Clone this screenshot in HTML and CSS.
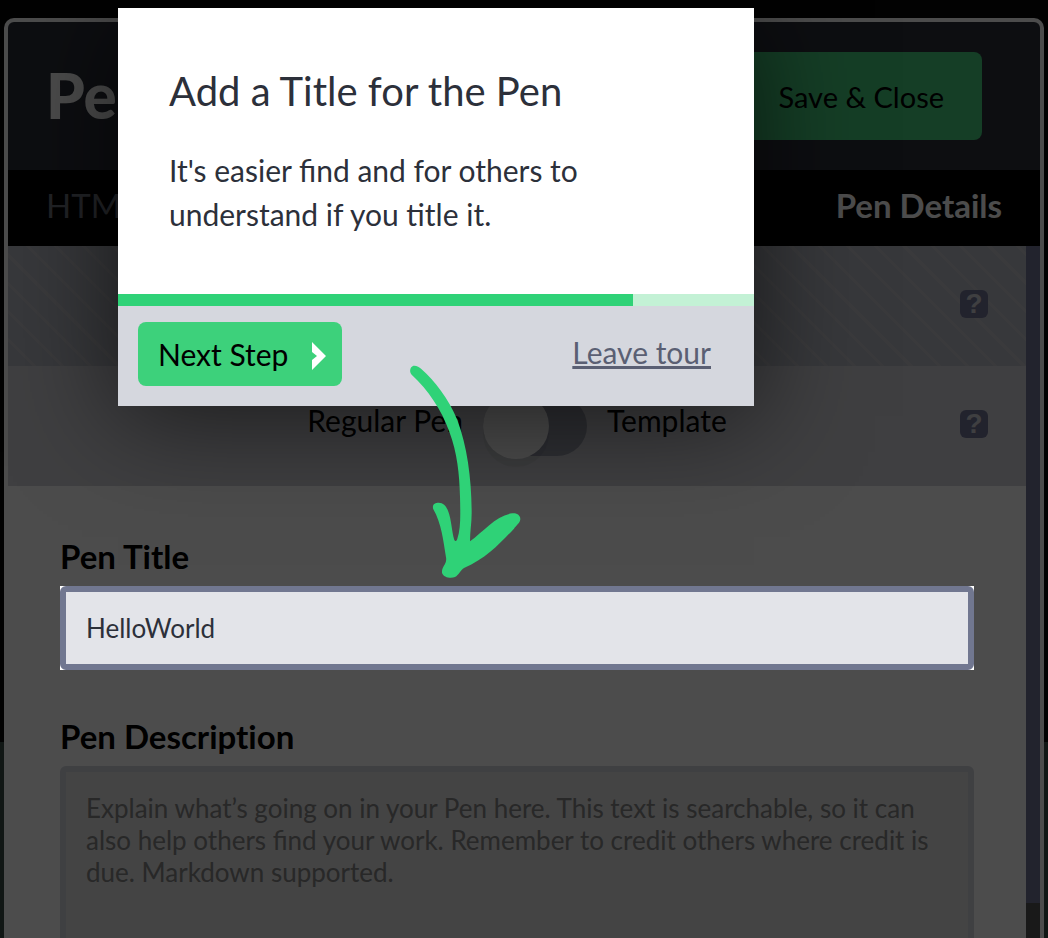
FILE: index.html
```html
<!DOCTYPE html>
<html lang="en">
<head>
    <meta charset="UTF-8">
    <meta name="viewport" content="width=device-width, initial-scale=1.0">
    <title>Pen Settings</title>
    <link rel="stylesheet" href="styles.css">
</head>
<body>

<main class="settings">
    <header class="settings-header">
        <h1>Pen</h1>
        <button type="button" class="save-button">Save &amp; Close</button>
    </header>
    <nav class="tabs">
        <a href="#html">HTML</a>
        <a href="#details" class="active">Pen Details</a>
    </nav>
    <div class="settings-body">
        <form class="settings-form">
            <div class="option-row striped">
                <button type="button" class="help" aria-label="Help">?</button>
            </div>
            <div class="option-row">
                <div class="toggle-group">
                    <label for="template">Regular Pen</label>
                    <input type="checkbox" id="template" name="template" class="toggle">
                    <label for="template">Template</label>
                </div>
                <button type="button" class="help" aria-label="Help">?</button>
            </div>
            <div class="fields">
                <div class="form-group">
                    <label for="title">Pen Title</label>
                    <div class="spotlight">
                        <input type="text" id="title" name="title" value="HelloWorld">
                    </div>
                </div>
                <div class="form-group">
                    <label for="description">Pen Description</label>
                    <textarea id="description" name="description" rows="6" placeholder="Explain what’s going on in your Pen here. This text is searchable, so it can also help others find your work. Remember to credit others where credit is due. Markdown supported."></textarea>
                </div>
            </div>
        </form>
        <div class="scrollbar"><div class="thumb"></div></div>
    </div>
</main>

<section class="tour">
    <div class="tour-text">
        <h2>Add a Title for the Pen</h2>
        <p>It's easier find and for others to understand if you title it.</p>
    </div>
    <div class="progress"><div class="progress-fill" style="width: 81%"></div></div>
    <footer class="tour-footer">
        <button type="button" class="next-button">
            Next Step
            <svg width="14" height="32" viewBox="0 0 14 32"><path d="M0 4L14 18L0 32V22L5 18L0 14Z" fill="#fff"/></svg>
        </button>
        <a href="#leave">Leave tour</a>
    </footer>
    <svg class="arrow" viewBox="90 75 336 648">
        <path fill="#2fd277" d="M103 77C111 77 118 81 124 87C165 124 205 175 232 240C262 320 275 420 275 520C275 550 270 575 270 604C310 575 350 525 397 520C408 519 421 524 421 537C421 548 408 557 402 566C360 610 320 655 252 684C240 692 237 705 225 711C213 716 190 713 186 698C184 680 202 672 198 652C190 600 184 550 160 508C155 493 165 488 176 488C190 488 198 498 204 512C215 540 215 575 223 600C226 606 230 602 232 596C243 565 241 520 240 470C238 400 232 340 208 275C185 210 145 150 95 104C86 95 91 77 103 77Z"/>
    </svg>
</section>

</body>
</html>
```

FILE: styles.css
```css
* {
    box-sizing: border-box;
}
body {
    font-family: Lato, sans-serif;
    font-size: 30px;
    background: linear-gradient(#080808 742px, #394d49 742px);
    height: 100vh;
    margin: 0;
    padding: 18px 4px 0;
    overflow: hidden;
}
button,
input,
textarea {
    font-family: inherit;
    font-size: inherit;
    margin: 0;
}
button {
    border: none;
    cursor: pointer;
}
h1,
h2,
p {
    margin: 0;
}

/* settings panel */
.settings {
    height: 100%;
    display: flex;
    flex-direction: column;
    background-color: #fff;
    border: 4px solid #fff;
    border-bottom: none;
    border-radius: 10px 10px 0 0;
}
.settings-header {
    display: flex;
    justify-content: space-between;
    align-items: center;
    padding: 30px 58px 30px 38px;
    background-color: #2c303a;
    border-radius: 6px 6px 0 0;
}
.settings-header h1 {
    padding-bottom: 2px;
    color: #fff;
    font-size: 62px;
    font-weight: 900;
    line-height: 80px;
}
.save-button {
    height: 88px;
    padding: 0 38px;
    background-color: #47cf7f;
    color: #000;
    font-size: 29px;
    border-radius: 8px;
}
.tabs {
    display: flex;
    justify-content: space-between;
    padding: 0 38px 6px;
    background-color: #000;
    font-size: 33px;
    line-height: 70px;
}
.tabs a {
    color: #717580;
    text-decoration: none;
}
.tabs .active {
    color: #fff;
    font-weight: bold;
}
.settings-body {
    flex: 1;
    min-height: 0;
    display: flex;
}
.settings-form {
    flex: 1;
}
.scrollbar {
    width: 14px;
    background-color: #555;
}
.thumb {
    height: 95%;
    background-color: #747598;
}

/* option rows */
.option-row {
    height: 120px;
    display: grid;
    grid-template-columns: 1fr auto 1fr;
    align-items: center;
    padding: 0 38px;
    background-color: #d2d3d9;
}
.option-row.striped {
    background: repeating-linear-gradient(45deg, #b9bcc6 0 17px, #c1c3ca 17px 20px);
}
.toggle-group {
    grid-column: 2;
    display: flex;
    align-items: center;
    gap: 20px;
}
.toggle-group label {
    padding-bottom: 12px;
}
.toggle {
    appearance: none;
    width: 104px;
    height: 60px;
    background-color: #9a9dac;
    border-radius: 30px;
}
.toggle::before {
    content: "";
    display: block;
    width: 66px;
    height: 66px;
    margin-top: -3px;
    background-color: #fff;
    border-radius: 50%;
    box-shadow: 0 8px 0 rgba(0, 0, 0, 0.05);
}
.toggle:checked::before {
    margin-left: 38px;
}
.help {
    grid-column: 3;
    justify-self: end;
    width: 28px;
    height: 28px;
    margin-bottom: 4px;
    padding: 0;
    background-color: #747598;
    color: #d2d3d9;
    border-radius: 6px;
    font-family: "Liberation Sans", sans-serif;
    font-size: 28px;
    font-weight: bold;
    line-height: 28px;
}

/* fields */
.fields {
    padding: 50px 52px;
}
.form-group {
    margin-bottom: 46px;
}
.form-group label {
    display: block;
    margin-bottom: 10px;
    font-size: 33px;
    font-weight: bold;
    font-variant-ligatures: none;
    line-height: 40px;
}
.form-group input,
.form-group textarea {
    display: block;
    width: 100%;
    padding: 20px;
    background-color: #e3e4e9;
    color: #2c303a;
    border: 6px solid #d3d5dd;
    border-radius: 6px;
    font-size: 26px;
    line-height: 32px;
    outline: none;
    resize: none;
}
.form-group input {
    height: 84px;
    border-color: #717790;
}
.form-group textarea {
    background-color: #e3e3e4;
}
.form-group textarea::placeholder {
    color: #858585;
}
/* dims everything but the highlighted field */
.spotlight {
    position: relative;
    z-index: 1;
    background-color: #fff;
    box-shadow: 0 0 0 2000px rgba(0, 0, 0, 0.7);
}

/* tour popup */
.tour {
    position: absolute;
    z-index: 2;
    top: 8px;
    left: 118px;
    width: 636px;
    background-color: #fff;
    color: #2c303a;
    box-shadow: 0 10px 100px rgba(0, 0, 0, 0.6);
}
.tour-text {
    padding: 57px 51px 58px;
}
.tour-text h2 {
    margin-bottom: 31px;
    font-size: 40px;
    font-weight: normal;
    line-height: 52px;
}
.tour-text p {
    line-height: 44px;
}
.progress {
    height: 12px;
    background-color: #c3f1d5;
}
.progress-fill {
    height: 100%;
    background-color: #2fd277;
}
.tour-footer {
    display: flex;
    justify-content: space-between;
    align-items: center;
    padding: 16px 43px 20px 20px;
    background-color: #d5d7de;
}
.tour-footer a {
    padding-bottom: 4px;
    color: #5a5f73;
}
.next-button {
    display: flex;
    align-items: center;
    gap: 24px;
    height: 64px;
    padding: 0 16px 0 20px;
    background-color: #3dd17b;
    color: #000;
    border-radius: 8px;
}
.arrow {
    position: absolute;
    top: 357px;
    left: 292px;
    width: 112px;
    height: 216px;
}
```
